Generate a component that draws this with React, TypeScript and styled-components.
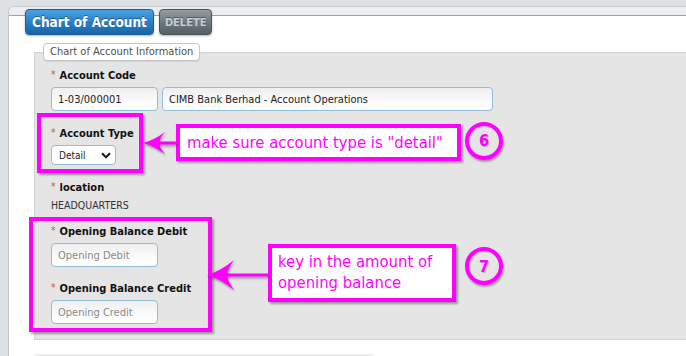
import React from 'react'
import styled, { createGlobalStyle } from 'styled-components'

const MAGENTA = '#ff00ff'
const FONT = '"DejaVu Sans Condensed", "DejaVu Sans", "Liberation Sans", sans-serif'

const GlobalStyle = createGlobalStyle`
  html, body {
    margin: 0;
    padding: 0;
    background: #dee1e3;
    overflow: hidden;
  }

  body {
    font-family: ${FONT};
  }
`

const Page = styled.div`
  box-sizing: border-box;
  height: 356px;
  padding: 6px 0 0 8px;
`

const Panel = styled.div`
  height: 100%;
  margin-right: -30px;
  background: #fff;
  border-top: 1px solid #c9cccf;
  border-left: 1px solid #c3c7ca;
  border-top-left-radius: 6px;
  overflow: hidden;
`

const Header = styled.div`
  display: flex;
  gap: 5px;
  height: 28px;
  padding: 2px 0 0 16px;
  box-sizing: border-box;
  background: linear-gradient(
    to bottom,
    #eceeef 0,
    #eceeef 8px,
    #a3a3a3 8px,
    #a3a3a3 9px,
    #fff 9px
  );
`

const TabButton = styled.button<{ primary?: boolean }>`
  height: 26px;
  margin: 0;
  padding: 0 ${(p) => (p.primary ? '6px' : '5px')};
  border-radius: 4px;
  font-family: ${FONT};
  font-weight: 700;
  font-size: ${(p) => (p.primary ? '13.5px' : '11px')};
  color: ${(p) => (p.primary ? '#fff' : '#c5cdd1')};
  border: 1px solid ${(p) => (p.primary ? '#1b5d99' : '#4c5559')};
  background: ${(p) =>
    p.primary
      ? 'linear-gradient(to bottom, #4aa2e2 0%, #2b7fc6 50%, #1a64a8 100%)'
      : 'linear-gradient(to bottom, #939ea2 0%, #6f7a7e 50%, #566064 100%)'};
  text-shadow: 0 -1px 0 rgba(0, 0, 0, 0.35);
  box-shadow: 0 1px 2px rgba(0, 0, 0, 0.3);
  cursor: pointer;
`

const Content = styled.div`
  padding: 8px 0 0 25px;
`

const Fieldset = styled.fieldset`
  margin: 0;
  padding: 8px 0 7px 0;
  min-width: 0;
  border: 1px solid #d5d5d5;
  border-right: none;
  background: #e5e5e5;
`

const Legend = styled.legend`
  margin-left: 8px;
  padding: 0 6px;
  height: 18px;
  box-sizing: border-box;
  line-height: 16px;
  font-size: 11px;
  color: #505050;
  background: #fff;
  border: 1px solid #c6c6c6;
  border-radius: 4px;
  box-shadow: 0 1px 1px rgba(0, 0, 0, 0.08);
`

const Field = styled.div<{ top?: number }>`
  padding-left: 16px;
  margin-top: ${(p) => p.top ?? 0}px;
`

const Label = styled.div`
  display: flex;
  gap: 4px;
  line-height: 14px;
  margin-bottom: 4px;
  font-size: 11px;
  font-weight: 700;
  color: #111;
`

const Required = styled.span`
  color: #e0484f;
  font-weight: 400;
  font-size: 10px;
  line-height: 12px;
`

const InputRow = styled.div`
  display: flex;
  gap: 4px;
`

const TextInput = styled.input<{ width: number }>`
  box-sizing: border-box;
  width: ${(p) => p.width}px;
  height: 24px;
  margin: 0;
  padding: 0 6px;
  font-family: ${FONT};
  font-size: 11px;
  color: #222;
  border: 1px solid #8fbfd9;
  border-radius: 4px;
  background: linear-gradient(to bottom, #efefef 0%, #fdfdfd 70%);
  outline: none;

  &::placeholder {
    color: #8a8a8a;
  }
`

const SelectBox = styled.div`
  box-sizing: border-box;
  display: flex;
  align-items: center;
  justify-content: space-between;
  width: 65px;
  height: 20px;
  padding: 0 4px 0 7px;
  font-size: 10px;
  color: #222;
  background: #fff;
  border: 1px solid #8fbfd9;
  border-radius: 4px;
`

const ValueText = styled.div`
  line-height: 12px;
  font-size: 10.5px;
  color: #333;
`

const AnnotatedRow = styled.div<{ top?: number }>`
  display: flex;
  align-items: center;
  margin-top: ${(p) => p.top ?? 0}px;
`

const HighlightBox = styled.div<{ width: number; offset: number; pad: string }>`
  box-sizing: border-box;
  flex: none;
  width: ${(p) => p.width}px;
  margin-left: ${(p) => p.offset}px;
  padding: ${(p) => p.pad};
  border: 4px solid ${MAGENTA};
  box-shadow: 2px 2px 2px rgba(0, 0, 0, 0.35);
`

const Callout = styled.div<{ width: number; height: number; pad: string; lift?: number; single?: boolean }>`
  box-sizing: border-box;
  flex: none;
  width: ${(p) => p.width}px;
  height: ${(p) => p.height}px;
  margin-bottom: ${(p) => p.lift ?? 0}px;
  padding: ${(p) => p.pad};
  font-size: 16.5px;
  line-height: ${(p) => (p.single ? '29px' : '21px')};
  color: ${MAGENTA};
  background: #fff;
  border: 4px solid ${MAGENTA};
  box-shadow: 2px 2px 2px rgba(0, 0, 0, 0.35);
  white-space: nowrap;
`

const StepBadge = styled.div<{ gap: number; lift: number }>`
  box-sizing: border-box;
  flex: none;
  display: grid;
  place-items: center;
  width: 38px;
  height: 38px;
  margin-left: ${(p) => p.gap}px;
  margin-bottom: ${(p) => p.lift}px;
  border: 4px solid ${MAGENTA};
  border-radius: 50%;
  font-size: 16px;
  font-weight: 700;
  color: ${MAGENTA};
  text-shadow: 1px 1px 1px rgba(0, 0, 0, 0.25);
  box-shadow: 1px 2px 2px rgba(0, 0, 0, 0.35), inset 1px 1px 1px rgba(0, 0, 0, 0.15);
`

const ArrowSvg = styled.svg<{ overlap?: number }>`
  flex: none;
  display: block;
  margin-left: ${(p) => p.overlap ?? 0}px;
  filter: drop-shadow(1px 2px 1px rgba(0, 0, 0, 0.35));
`

const NextSection = styled.div`
  width: 340px;
  height: 10px;
  margin-top: 14px;
  background: linear-gradient(to bottom, #ededed, #f8f8f8);
  border-radius: 3px 3px 0 0;
`

type ArrowProps = { width: number; height: number; head: number; overlap?: number }

const Arrow = ({ width, height, head, overlap }: ArrowProps) => {
  const c = height / 2
  const s = 1.6
  const d = [
    `M0 ${c}`,
    `Q${head * 0.5} ${c - height * 0.12} ${head} 1`,
    `Q${head * 0.7} ${c - s * 2} ${head * 0.78} ${c - s}`,
    `L${width} ${c - s}`,
    `L${width} ${c + s}`,
    `L${head * 0.78} ${c + s}`,
    `Q${head * 0.7} ${c + s * 2} ${head} ${height - 1}`,
    `Q${head * 0.5} ${c + height * 0.12} 0 ${c}`,
    'Z',
  ].join(' ')
  return (
    <ArrowSvg overlap={overlap} width={width} height={height} viewBox={`0 0 ${width} ${height}`}>
      <path d={d} fill={MAGENTA} />
    </ArrowSvg>
  )
}

const Chevron = () => (
  <svg width="10" height="7" viewBox="0 0 10 7">
    <path d="M1 1.2 L5 5.2 L9 1.2" fill="none" stroke="#222" strokeWidth="2.2" />
  </svg>
)

const FieldLabel = ({ children }: { children: React.ReactNode }) => (
  <Label>
    <Required>*</Required>
    <span>{children}</span>
  </Label>
)

const Spacer = styled.div`
  height: 15px;
`

export default function App() {
  return (
    <>
      <GlobalStyle />
      <Page>
        <Panel>
          <Header>
            <TabButton primary>Chart of Account</TabButton>
            <TabButton>DELETE</TabButton>
          </Header>
          <Content>
            <Fieldset>
              <Legend>Chart of Account Information</Legend>

              <Field>
                <FieldLabel>Account Code</FieldLabel>
                <InputRow>
                  <TextInput width={107} defaultValue="1-03/000001" />
                  <TextInput width={331} defaultValue="CIMB Bank Berhad - Account Operations" />
                </InputRow>
              </Field>

              <AnnotatedRow top={2}>
                <HighlightBox width={106} offset={2} pad="10px 0 4px 10px">
                  <FieldLabel>Account Type</FieldLabel>
                  <SelectBox>
                    <span>Detail</span>
                    <Chevron />
                  </SelectBox>
                </HighlightBox>
                <Arrow width={33} height={24} head={22} />
                <Callout width={285} height={37} pad="0 0 0 7px" lift={2} single>
                  make sure account type is "detail"
                </Callout>
                <StepBadge gap={4} lift={5}>6</StepBadge>
              </AnnotatedRow>

              <Field top={8}>
                <FieldLabel>location</FieldLabel>
                <ValueText>HEADQUARTERS</ValueText>
              </Field>

              <AnnotatedRow top={6}>
                <HighlightBox width={183} offset={-6} pad="4px 0 4px 18px">
                  <FieldLabel>Opening Balance Debit</FieldLabel>
                  <TextInput width={107} placeholder="Opening Debit" />
                  <Spacer />
                  <FieldLabel>Opening Balance Credit</FieldLabel>
                  <TextInput width={107} placeholder="Opening Credit" />
                </HighlightBox>
                <Arrow width={61} height={32} head={27} overlap={-5} />
                <Callout width={188} height={58} pad="3px 0 0 6px" lift={3}>
                  key in the amount of
                  <br />
                  opening balance
                </Callout>
                <StepBadge gap={9} lift={17}>7</StepBadge>
              </AnnotatedRow>
            </Fieldset>
            <NextSection />
          </Content>
        </Panel>
      </Page>
    </>
  )
}
